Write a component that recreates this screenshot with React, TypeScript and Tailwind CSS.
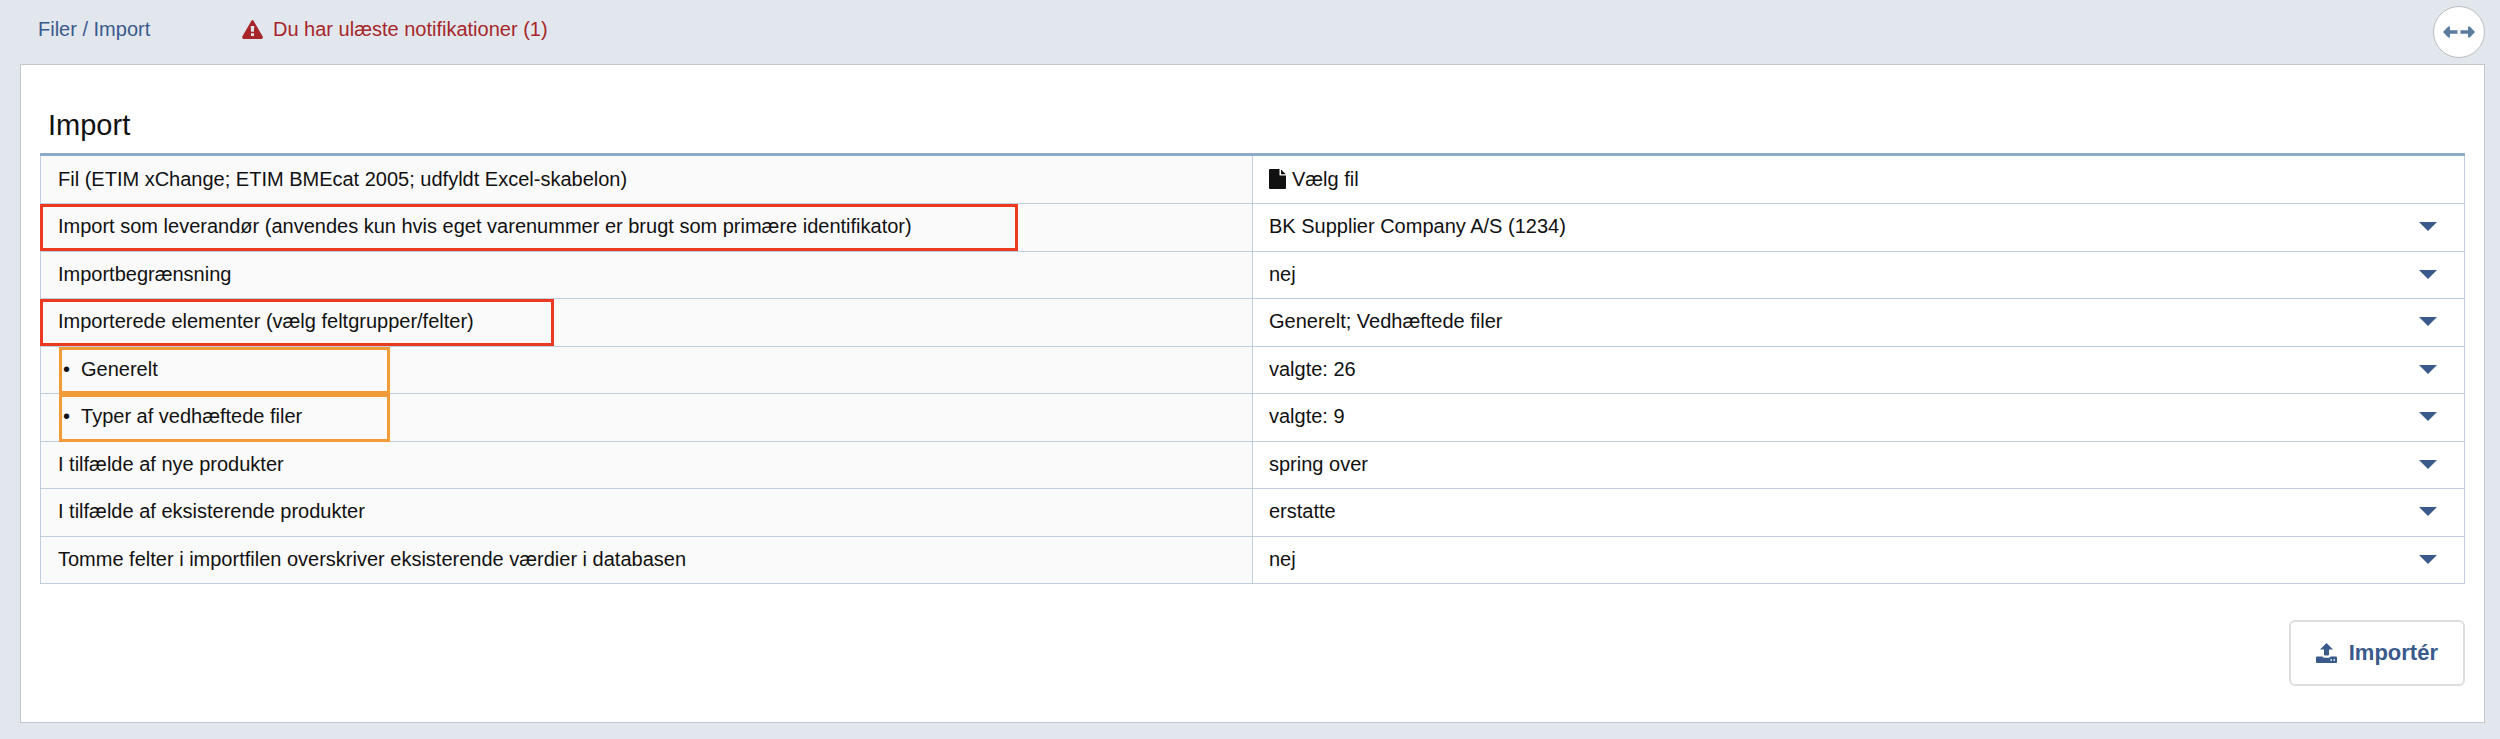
import React, { useState } from "react";
import { clsx } from "clsx";

type Row = {
  id: string;
  label: string;
  value?: string;
  sub?: boolean;
  mark?: string;
};

const redMark = "border-[#ec3a20] -left-px top-0 bottom-0";
const orangeMark = "border-[#f19a38] left-[18px] top-0 -bottom-px w-[331px]";

const rows: Row[] = [
  {
    id: "file",
    label: "Fil (ETIM xChange; ETIM BMEcat 2005; udfyldt Excel-skabelon)",
  },
  {
    id: "supplier",
    label:
      "Import som leverandør (anvendes kun hvis eget varenummer er brugt som primære identifikator)",
    value: "BK Supplier Company A/S (1234)",
    mark: clsx(redMark, "w-[978px]"),
  },
  { id: "restriction", label: "Importbegrænsning", value: "nej" },
  {
    id: "elements",
    label: "Importerede elementer (vælg feltgrupper/felter)",
    value: "Generelt; Vedhæftede filer",
    mark: clsx(redMark, "w-[514px]"),
  },
  {
    id: "general",
    label: "Generelt",
    value: "valgte: 26",
    sub: true,
    mark: orangeMark,
  },
  {
    id: "attachments",
    label: "Typer af vedhæftede filer",
    value: "valgte: 9",
    sub: true,
    mark: orangeMark,
  },
  { id: "new", label: "I tilfælde af nye produkter", value: "spring over" },
  {
    id: "existing",
    label: "I tilfælde af eksisterende produkter",
    value: "erstatte",
  },
  {
    id: "empty",
    label: "Tomme felter i importfilen overskriver eksisterende værdier i databasen",
    value: "nej",
  },
];

const WarningIcon = () => (
  <svg viewBox="0 0 21 19" className="h-[19px] w-[21px]" fill="currentColor">
    <path
      fillRule="evenodd"
      d="M9.300 0.900Q10.500 -0.700 11.700 0.900L20.700 16.500Q21.300 18.800 19.300 19H1.700Q-0.300 18.800 0.300 16.500ZM8.700 6L9.100 11.700H11.900L12.300 6ZM9 13.300V16H12V13.300Z"
    />
  </svg>
);

const FileIcon = () => (
  <svg viewBox="0 0 17 20" className="h-5 w-[17px]" fill="currentColor">
    <path d="M1 0H10.500V6.500H17V19Q17 20 16 20H1Q0 20 0 19V1Q0 0 1 0Z" />
    <path d="M12 0.500L16.800 5.300H12Z" />
  </svg>
);

const UploadIcon = () => (
  <svg viewBox="0 0 21 20" className="h-5 w-[21px]" fill="currentColor">
    <path d="M10.500 0L17 6.500H13V11.500Q13 12.500 12 12.500H9Q8 12.500 8 11.500V6.500H4Z" />
    <path
      fillRule="evenodd"
      d="M1 13.500H6.500Q7 14.800 8.500 14.800H12.500Q14 14.800 14.500 13.500H20Q21 13.500 21 14.500V19Q21 20 20 20H1Q0 20 0 19V14.500Q0 13.500 1 13.500ZM14.500 16.300V17.800H16V16.300ZM17.500 16.300V17.800H19V16.300Z"
    />
  </svg>
);

const ArrowsIcon = () => (
  <svg viewBox="0 0 32 12" className="h-3 w-8" fill="currentColor">
    <path d="M0 6L5.500 0.200L7 1V4.300H14.500V7.700H7V11L5.500 11.800Z" />
    <path d="M32 6L26.500 0.200L25 1V4.300H17.500V7.700H25V11L26.500 11.800Z" />
  </svg>
);

const App = () => {
  const [fileName, setFileName] = useState("Vælg fil");

  return (
    <div className="min-h-screen bg-[#e2e7ee] pb-4 pl-5 pr-[15px] font-['Liberation_Sans',Arial,sans-serif] text-xl leading-6 text-[#111111]">
      <header className="flex h-16 items-center pl-[18px]">
        <a href="#" className="w-[204px] pb-[6px] text-[#3a5a8c]">
          Filer / Import
        </a>
        <a href="#" className="flex items-center gap-[10px] pb-[6px] text-[#a6262a]">
          <WarningIcon />
          Du har ulæste notifikationer (1)
        </a>
        <button
          type="button"
          aria-label="Udvid"
          className="ml-auto flex size-[52px] items-center justify-center rounded-full border border-[#bdbdbd] bg-white text-[#5b7b9f]"
        >
          <ArrowsIcon />
        </button>
      </header>

      <main className="border border-[#c3c7cc] bg-white px-[19px] pt-12 pb-9">
        <h1 className="pb-4 pl-2 text-[29px] leading-6">Import</h1>

        <table className="h-[431px] w-full table-fixed border-collapse border border-t-[3px] border-[#c0cfe0] border-t-[#8eaacb]">
          <tbody>
            {rows.map((row) => (
              <tr key={row.id} className="border-b border-[#c0cfe0]">
                <th
                  scope="row"
                  className="relative border-r border-[#c0cfe0] bg-[#fafafa] pb-[2px] pl-[17px] text-left font-normal"
                >
                  {row.mark && (
                    <span
                      className={clsx(
                        "pointer-events-none absolute border-[3px]",
                        row.mark
                      )}
                    />
                  )}
                  <label
                    htmlFor={row.id}
                    className={clsx(row.sub && "flex items-center gap-[11px] pl-[5px]")}
                  >
                    {row.sub && <span>•</span>}
                    {row.label}
                  </label>
                </th>
                <td className="p-0 pb-[2px]">
                  {row.value ? (
                    <div className="relative">
                      <select
                        id={row.id}
                        className="w-full appearance-none bg-transparent pl-4 pr-14 outline-none"
                      >
                        <option>{row.value}</option>
                      </select>
                      <svg
                        viewBox="0 0 18 9"
                        className="pointer-events-none absolute right-[27px] top-2 h-[9px] w-[18px]"
                        fill="#3a5a8c"
                      >
                        <path d="M0 0H18L9 9Z" />
                      </svg>
                    </div>
                  ) : (
                    <label className="flex cursor-pointer items-center gap-[6px] pl-4">
                      <FileIcon />
                      {fileName}
                      <input
                        id={row.id}
                        type="file"
                        className="hidden"
                        onChange={(e) =>
                          setFileName(e.target.files?.[0]?.name ?? "Vælg fil")
                        }
                      />
                    </label>
                  )}
                </td>
              </tr>
            ))}
          </tbody>
        </table>

        <div className="flex justify-end pt-9">
          <button
            type="button"
            className="flex h-[66px] items-center gap-3 rounded-md border-2 border-[#dedede] bg-white px-[25px] text-[22px] font-bold text-[#3a5a8c]"
          >
            <UploadIcon />
            Importér
          </button>
        </div>
      </main>
    </div>
  );
};

export default App;
